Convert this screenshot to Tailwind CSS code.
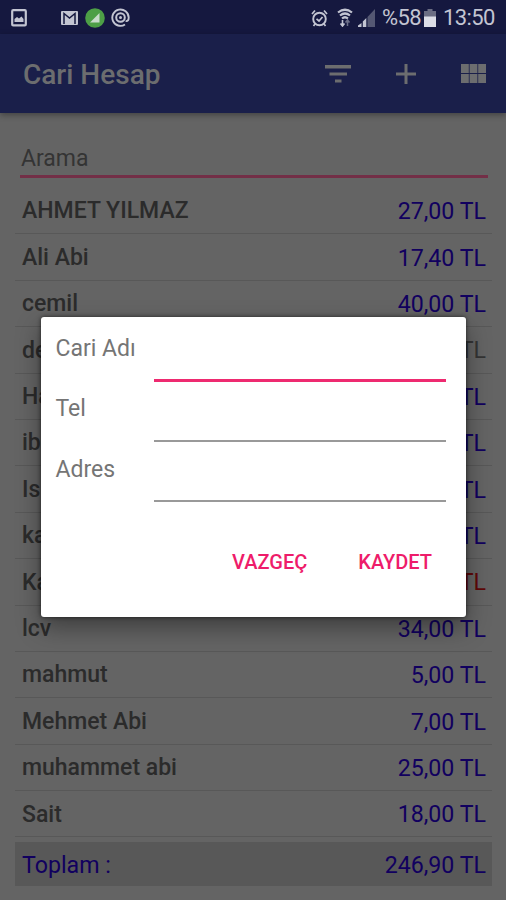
<!DOCTYPE html>
<html lang="tr">
  <head>
    <meta charset="UTF-8" />
    <meta name="viewport" content="width=device-width, initial-scale=1.0" />
    <title>Cari Hesap</title>
    <script src="https://cdn.jsdelivr.net/npm/@tailwindcss/browser@4"></script>
  </head>
  <body class="relative h-[900px] w-[506px] overflow-hidden bg-[#646464] font-['Roboto',sans-serif]">
    <!-- status bar -->
    <div class="flex h-[34px] items-center bg-[#15183f] pt-px pl-[11px] pr-3 text-[#c3c5d2]">
      <svg class="h-[18px] w-4" viewBox="0 0 16 18" fill="none">
        <rect x="1.2" y="1.2" width="13.6" height="15.2" rx="1" stroke="currentColor" stroke-width="2.2" />
        <path d="M3.5 13v-3l2.5-2 2 1.5 2.5-2 2 2.5v3z" fill="currentColor" />
      </svg>
      <svg class="ml-[34px] h-[14px] w-[17px]" viewBox="0 0 17 14" fill="none">
        <rect width="17" height="14" rx="1" fill="currentColor" />
        <path d="M3 13V2.5L8.5 7 14 2.5V13" stroke="#15183f" stroke-width="1.5" />
      </svg>
      <svg class="ml-[7px] h-5 w-5" viewBox="0 0 20 20">
        <circle cx="10" cy="10" r="9.8" fill="#4d9f46" />
        <path d="M5 14.5 14.5 5v9.5z" fill="#c9dccb" />
      </svg>
      <svg class="ml-[6px] h-[19px] w-[19px]" viewBox="0 0 19 19" fill="none" stroke="currentColor">
        <path d="M14 16.5A8.2 8.2 0 1 1 17.7 9.5c0 2.5-1 4-3 3.5" stroke-width="1.9" />
        <circle cx="9.5" cy="9.5" r="4.3" stroke-width="2" />
        <circle cx="9.5" cy="9.5" r="1.5" fill="currentColor" stroke="none" />
      </svg>

      <svg class="ml-auto h-[18px] w-[17px]" viewBox="0 0 17 18" fill="none" stroke="currentColor">
        <circle cx="8.5" cy="10" r="6.3" stroke-width="1.9" />
        <path d="M5.5 9.8 8 12l3.5-4M1 5l3-3.5M16 5l-3-3.500M4 15l-1.5 2M13 15l1.5 2" stroke-width="1.7" />
      </svg>
      <svg class="ml-[9px] h-[19px] w-4" viewBox="0 0 16 19" fill="none" stroke="currentColor">
        <path d="M1 4.5Q8-1 15 4.500" stroke-width="2.2" />
        <path d="M3 7.5q5-4 10 0M5 10.5q3-2.500 6 0" stroke-width="2.2" />
        <path d="M5.5 12v6M3.5 15.5l2 2.500 2-2.500" stroke-width="1.6" />
        <path d="M10.5 18v-6M8.5 14.5l2-2.500 2 2.500" stroke-width="1.5" opacity=".5" />
      </svg>
      <svg class="ml-[5px] h-[18px] w-[17px]" viewBox="0 0 17 18">
        <path d="M9.5 18V8L17 0v18z" fill="#555873" />
        <path d="M0 18v-1.5L3.5 14v4zM4.8 18v-5.5L8.3 9v9z" fill="currentColor" />
      </svg>
      <span class="ml-[7px] w-[39px] whitespace-nowrap text-[22px] leading-none tracking-[-0.6px]">%58</span>
      <svg class="ml-[3px] h-[18px] w-[12px]" viewBox="0 0 12 18">
        <path d="M3.5 0h5v2H12v6H0V2h3.5z" fill="#6b6d83" />
        <path d="M0 7.5h12V18H0z" fill="#dcdde6" />
      </svg>
      <span class="ml-[7px] w-[51px] whitespace-nowrap text-[22px] leading-none tracking-[-0.6px]">13:50</span>
    </div>

    <!-- app bar -->
    <header class="flex h-[79px] items-center bg-[#1a1f4a] pl-[23px] pr-5 text-[#6c6d6f] shadow-[0_2px_6px_rgba(0,0,0,0.35)]">
      <h1 class="mt-[3px] text-[28px] font-medium leading-none">Cari Hesap</h1>
      <svg class="ml-auto h-[18px] w-[26px]" viewBox="0 0 26 18" fill="currentColor">
        <path d="M0 0h26v3.5H0zM4.5 7.5H22v3H4.5zM10 14.5h6.5v3H10z" />
      </svg>
      <svg class="ml-[45px] h-5 w-5" viewBox="0 0 20 20" fill="currentColor">
        <path d="M8.5 0h3v8.5H20v3h-8.5V20h-3v-8.500H0v-3h8.500z" />
      </svg>
      <svg class="ml-[45px] h-[19px] w-[25px]" viewBox="0 0 25 19" fill="currentColor">
        <path d="M0 0h7.8v9H0zM8.6 0h7.8v9H8.6zM17.2 0H25v9h-7.8zM0 10h7.8v9H0zM8.6 10h7.8v9H8.6zM17.2 10H25v9h-7.8z" />
      </svg>
    </header>

    <main class="pl-[15px] pr-[14px]">
      <div class="ml-[5px] mr-[4px] flex h-[65px] items-end border-b-[3px] border-[#732f47] pb-[3px] pl-px text-[23px] leading-[27px] text-[#343434]">Arama</div>
      <ul id="accounts" class="mt-[10px]"></ul>
      <div class="mt-[5px] flex h-[44px] items-center justify-between bg-[#585858] pt-px pl-[7px] pr-[6px] text-[23.2px] text-[#11005f]">
        <span>Toplam :</span>
        <span>246,90 TL</span>
      </div>
    </main>

    <!-- new account dialog -->
    <div role="dialog" class="absolute left-[41px] top-[317px] h-[300px] w-[425px] rounded-[3px] bg-white pl-[14.5px] pr-5 shadow-[0_10px_24px_rgba(0,0,0,0.4),0_0_4px_rgba(0,0,0,0.6)]">
      <div class="flex h-[65px] justify-between pt-[18px] text-[23px] leading-[27px] text-[#757575]">
        <label>Cari Adı</label>
        <div class="w-[292px] border-b-[3px] border-[#ee2a70]"></div>
      </div>
      <div class="flex h-[60px] justify-between pt-[13px] text-[23px] leading-[27px] text-[#757575]">
        <label>Tel</label>
        <div class="mb-[0.5px] w-[292px] border-b-2 border-[#999999]"></div>
      </div>
      <div class="flex h-[60px] justify-between pt-[14px] text-[23px] leading-[27px] text-[#757575]">
        <label>Adres</label>
        <div class="mb-[0.5px] w-[292px] border-b-2 border-[#999999]"></div>
      </div>
      <div class="mt-[48px] flex justify-end gap-[51px] pr-[14px] text-[20px] font-medium leading-6 text-[#ee1c6a]">
        <button>VAZGEÇ</button>
        <button>KAYDET</button>
      </div>
    </div>

    <script>
      const accounts = [
        ["AHMET YILMAZ", "27,00 TL"],
        ["Ali Abi", "17,40 TL"],
        ["cemil", "40,00 TL"],
        ["de", "TL", "text-[#343434]"],
        ["Ha", "TL"],
        ["ib", "TL"],
        ["Is", "TL"],
        ["ka", "TL"],
        ["Ka", "TL", "text-[#5f0808]"],
        ["lcv", "34,00 TL"],
        ["mahmut", "5,00 TL"],
        ["Mehmet Abi", "7,00 TL"],
        ["muhammet abi", "25,00 TL"],
        ["Sait", "18,00 TL"],
      ];
      document.getElementById("accounts").innerHTML = accounts
        .map(
          ([name, amount, color = "text-[#11005f]"]) => `
          <li class="flex h-[46.4px] items-center justify-between border-b border-[#585858] pt-[2px] pl-[7px] pr-[6px] text-[23.2px]">
            <span class="text-[23px] font-medium text-[#2b2b2b]">${name}</span>
            <span class="${color}">${amount}</span>
          </li>`
        )
        .join("");
    </script>
  </body>
</html>
